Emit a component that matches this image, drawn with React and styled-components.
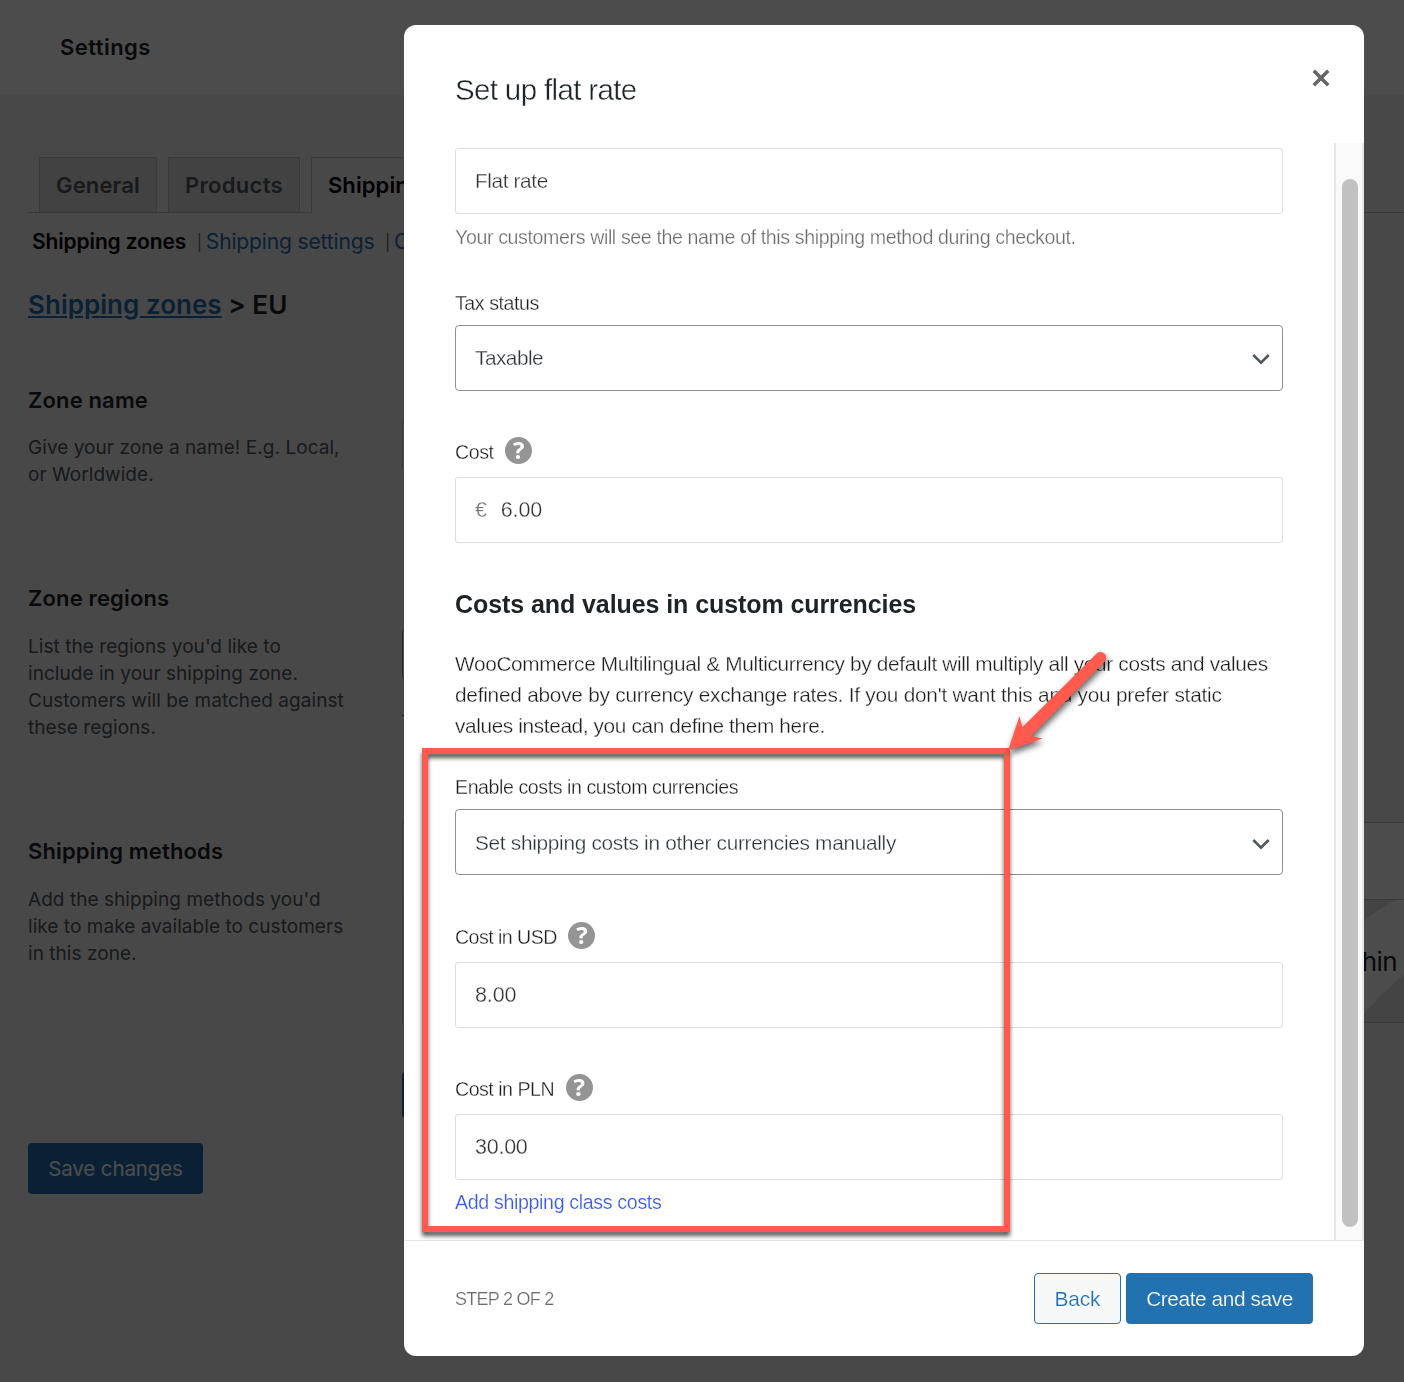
import React from 'react'
import styled, { createGlobalStyle } from 'styled-components'

const GlobalStyle = createGlobalStyle`
  * { box-sizing: border-box; }
  body {
    margin: 0;
    background: #f0f0f1;
    overflow: hidden;
  }
`

/* ---------- settings page ---------- */

const Page = styled.div`
  height: 1382px;
  background: #f0f0f1;
  color: #1d2327;
  font-family: Inter, sans-serif;
  font-size: 21px;
  overflow: hidden;
`

const TopBar = styled.header`
  display: flex;
  align-items: center;
  height: 95px;
  padding: 0 0 2px 60px;
  background: #fff;
  font-size: 22px;
  font-weight: 600;
  letter-spacing: 0.45px;
`

const Main = styled.main`
  padding: 62px 0 0 28px;
`

const Tabs = styled.nav`
  display: flex;
  gap: 11px;
  height: 56px;
  padding-left: 11px;
  border-bottom: 1px solid #c3c4c7;
`

const Tab = styled.a`
  height: ${p => (p.$active ? '56px' : '55px')};
  padding: 0 16px;
  border: 1px solid #c3c4c7;
  border-bottom: ${p => (p.$active ? '1px solid #f0f0f1' : 'none')};
  background: ${p => (p.$active ? '#f0f0f1' : '#dcdcde')};
  color: ${p => (p.$active ? '#000' : '#50575e')};
  font-size: 22px;
  font-weight: 600;
  line-height: 55px;
  letter-spacing: ${p => p.$spacing || 0}px;
`

const SubNav = styled.div`
  display: flex;
  height: 58px;
  padding-left: 4px;
  line-height: 58px;
  letter-spacing: -0.14px;
  color: #646970;
  white-space: pre;
`

const SubLink = styled.a`
  color: ${p => (p.$current ? '#000' : '#2271b1')};
  font-weight: ${p => (p.$current ? 600 : 400)};
`

const Divider = styled.span`
  padding: 0 4px 0 10.5px;
  font-size: 16px;
`

const Crumbs = styled.h2`
  height: 100px;
  margin: 0;
  padding-top: 14px;
  font-size: 26px;
  font-weight: 600;
  line-height: 40px;
  letter-spacing: 0.03px;
`

const CrumbLink = styled.a`
  color: #2271b1;
  text-decoration: underline;
`

const FormRow = styled.section`
  display: grid;
  grid-template-columns: 374px 1fr;
  height: ${p => p.$height}px;
`

const RowTitle = styled.h3`
  margin: 0 0 ${p => p.$gap}px;
  padding-top: 15px;
  font-size: 22px;
  font-weight: 600;
  line-height: 28px;
  letter-spacing: 0.15px;
`

const RowText = styled.p`
  width: 322px;
  margin: 0;
  color: #50575e;
  font-size: 19px;
  line-height: 27px;
  letter-spacing: 0.05px;
`

const FieldCell = styled.div`
  padding-top: ${p => p.$top || 0}px;
`

const ZoneField = styled.div`
  width: 600px;
  height: 54px;
  border: 1px solid ${p => p.$border};
  border-radius: 6px;
  background: #fff;
`

const ZoneLink = styled.div`
  width: 300px;
  margin-top: 34px;
  border-top: 1px solid #2271b1;
`

const MethodTable = styled.div`
  height: 201px;
  border: 1px solid #c3c4c7;
  border-right: none;
`

const MethodHead = styled.div`
  height: 77px;
  border-bottom: 1px solid #c3c4c7;
  background: #fff;
`

const MethodBody = styled.div`
  position: relative;
  display: flex;
  align-items: center;
  justify-content: flex-end;
  height: 122px;
  padding-right: 7px;
  font-size: 26px;
  letter-spacing: -0.6px;
`

const Backdrop = styled.svg`
  position: absolute;
  top: 0;
  right: 0;
`

const MethodText = styled.span`
  position: relative;
`

const AddButton = styled.div`
  width: 240px;
  height: 46px;
  margin-top: 49px;
  border-radius: 4px;
  background: #2271b1;
`

const SaveButton = styled.button`
  width: 175px;
  height: 51px;
  padding: 0;
  border: none;
  border-radius: 4px;
  background: #2271b1;
  color: #fff;
  font: 400 20.5px Inter, sans-serif;
  letter-spacing: -0.12px;
`

/* ---------- modal ---------- */

const Overlay = styled.div`
  position: fixed;
  inset: 0;
  display: flex;
  padding: 24.5px 40px 26px 404px;
  background: rgba(0, 0, 0, 0.7);
`

const Modal = styled.div`
  display: flex;
  flex: 1;
  flex-direction: column;
  border-radius: 12px;
  background: #fff;
  color: #1e1e1e;
  font-family: 'Liberation Sans', Arial, sans-serif;
  overflow: hidden;
`

const ModalHeader = styled.div`
  display: flex;
  justify-content: space-between;
  height: 118.5px;
  padding: 44.5px 34px 0 51px;
`

const Title = styled.h1`
  margin: 0;
  color: #1d2327;
  font-size: 29.5px;
  font-weight: 400;
  line-height: 41px;
  letter-spacing: -0.65px;
  -webkit-text-stroke: 0.4px #fff;
`

const CloseIcon = styled.svg`
  width: 18px;
  height: 18px;
`

const ModalBody = styled.div`
  display: flex;
  justify-content: space-between;
  height: 1097px;
`

const Content = styled.div`
  width: 879px;
  padding: 5px 0 0 51px;
`

const Control = styled.div`
  display: flex;
  align-items: center;
  justify-content: space-between;
  height: 66px;
  padding: ${p => p.$drop || 0}px 12px 0 19px;
  border: 1px solid ${p => (p.$select ? '#8c8f94' : '#dcdcde')};
  border-radius: ${p => (p.$select ? 4 : 3)}px;
  color: ${p => (p.$select ? '#2c3338' : '#333')};
  font-size: ${p => (p.$numeric ? 21.5 : 20.8)}px;
  letter-spacing: ${p => p.$spacing || 0}px;
  -webkit-text-stroke: 0.3px #fff;
`

const Currency = styled.span`
  margin-right: 14px;
  color: #757575;
`

const Hint = styled.p`
  margin: 10.5px 0 0;
  color: #6c6c6c;
  font-size: 19.6px;
  line-height: 24px;
  letter-spacing: -0.38px;
  -webkit-text-stroke: 0.25px #fff;
`

const Label = styled.div`
  display: flex;
  align-items: center;
  height: 28px;
  margin: ${p => p.$top}px 0 ${p => p.$bottom}px;
  padding-top: 1px;
  font-size: 19.6px;
  letter-spacing: ${p => p.$spacing || -0.43}px;
  -webkit-text-stroke: 0.3px #fff;
`

const HelpTip = styled.span`
  width: 27px;
  height: 27px;
  margin: -4px 0 0 11.7px;
  border-radius: 50%;
  background: #949494;
  color: #fff;
  font: 700 24px/26px 'Open Sans', sans-serif;
  letter-spacing: 0;
  text-align: center;
  -webkit-text-stroke: 0;
`

const SectionTitle = styled.h2`
  margin: 46px 0 28.5px;
  color: #1d2327;
  font-size: 25px;
  font-weight: 700;
  line-height: 30px;
  letter-spacing: -0.08px;
`

const Intro = styled.p`
  margin: 0;
  font-size: 20.8px;
  line-height: 31px;
  white-space: nowrap;
  -webkit-text-stroke: 0.3px #fff;
`

const IntroLine = styled.span`
  display: block;
  letter-spacing: ${p => p.$spacing}px;
`

const ClassLink = styled.a`
  display: block;
  margin-top: 9.5px;
  color: #3858e9;
  font-size: 19.6px;
  line-height: 24px;
  letter-spacing: -0.34px;
  -webkit-text-stroke: 0.2px #fff;
`

const Track = styled.div`
  width: 30px;
  padding: 36px 0 13px 6px;
  border: solid #e8e8e8;
  border-width: 0 2px;
  background: #fafafa;
`

const Thumb = styled.div`
  width: 16px;
  height: 100%;
  border-radius: 8px;
  background: #c1c1c1;
`

const Footer = styled.div`
  display: flex;
  flex: 1;
  align-items: center;
  gap: 5px;
  padding: 0 51px;
  border-top: 1px solid #e4e4e4;
`

const Step = styled.span`
  margin-right: auto;
  padding-top: 2px;
  color: #6c6c6c;
  font-size: 18px;
  letter-spacing: -0.75px;
  -webkit-text-stroke: 0.2px #fff;
`

const Button = styled.button`
  width: ${p => (p.$primary ? 187 : 87)}px;
  height: 51px;
  padding: 0;
  border: 1px solid #2271b1;
  border-radius: 4px;
  background: ${p => (p.$primary ? '#2271b1' : '#f6f7f7')};
  color: ${p => (p.$primary ? '#fff' : '#2271b1')};
  font: 400 20.8px 'Liberation Sans', Arial, sans-serif;
  letter-spacing: ${p => (p.$primary ? -0.4 : -0.1)}px;
  -webkit-text-stroke: 0.2px ${p => (p.$primary ? '#2271b1' : '#f6f7f7')};
`

/* ---------- annotation ---------- */

const Highlight = styled.div`
  position: fixed;
  top: 748px;
  left: 422px;
  width: 588px;
  height: 484px;
  border: solid #ff5a4d;
  border-width: 6.5px 6px 6px;
  filter: drop-shadow(0 4px 2px rgba(0, 0, 0, 0.65));
`

const Arrow = styled.svg`
  position: fixed;
  top: 640px;
  left: 1000px;
  filter: drop-shadow(1px 4px 3px rgba(0, 0, 0, 0.6));
`

const ChevronIcon = styled.svg`
  margin-top: 2px;
`

function Chevron() {
  return (
    <ChevronIcon width="18" height="12" viewBox="0 0 18 12">
      <path d="M1.3 2 L9 9.6 L16.7 2" fill="none" stroke="#50575e" strokeWidth="2.6" />
    </ChevronIcon>
  )
}

function Help() {
  return <HelpTip>?</HelpTip>
}

function ZoneRow({ title, text, height, top, gap = 21, children }) {
  return (
    <FormRow $height={height}>
      <div>
        <RowTitle $gap={gap}>{title}</RowTitle>
        <RowText>{text}</RowText>
      </div>
      <FieldCell $top={top}>{children}</FieldCell>
    </FormRow>
  )
}

function SettingsPage() {
  return (
    <Page>
      <TopBar>Settings</TopBar>
      <Main>
        <Tabs>
          <Tab $spacing={0.16}>General</Tab>
          <Tab $spacing={0.3}>Products</Tab>
          <Tab $active $spacing={0.1}>Shipping</Tab>
        </Tabs>
        <SubNav>
          <SubLink $current>Shipping zones</SubLink>
          <Divider>|</Divider>
          <SubLink>Shipping settings</SubLink>
          <Divider>|</Divider>
          <SubLink>C</SubLink>
        </SubNav>
        <Crumbs><CrumbLink>Shipping zones</CrumbLink> &gt; EU</Crumbs>
        <ZoneRow title="Zone name" text="Give your zone a name! E.g. Local, or Worldwide." height={198} top={47} gap={20}>
          <ZoneField $border="#c3c4c7" />
        </ZoneRow>
        <ZoneRow
          title="Zone regions"
          text="List the regions you'd like to include in your shipping zone. Customers will be matched against these regions."
          height={253}
          top={58}
        >
          <ZoneField $border="#8c8f94" />
          <ZoneLink />
        </ZoneRow>
        <ZoneRow
          title="Shipping methods"
          text="Add the shipping methods you'd like to make available to customers in this zone."
          height={321}
        >
          <MethodTable>
            <MethodHead />
            <MethodBody>
              <Backdrop width="60" height="122">
                <rect width="60" height="122" fill="#fff" />
                <path d="M0 0 H52 Q34 9 20 21 L0 36 Z" fill="#e3e3e3" />
                <path d="M60 75 Q38 92 20 114 L12 122 H60 Z" fill="#e3e3e3" />
              </Backdrop>
              <MethodText>hin</MethodText>
            </MethodBody>
          </MethodTable>
          <AddButton />
        </ZoneRow>
        <SaveButton>Save changes</SaveButton>
      </Main>
    </Page>
  )
}

function FlatRateModal() {
  return (
    <Modal>
      <ModalHeader>
        <Title>Set up flat rate</Title>
        <CloseIcon viewBox="0 0 18 18">
          <path d="M1.8 1.8 L16.2 16.2 M16.2 1.8 L1.8 16.2" stroke="#666" strokeWidth="3.6" />
        </CloseIcon>
      </ModalHeader>
      <ModalBody>
        <Content>
          <Control $spacing={-0.38}>Flat rate</Control>
          <Hint>Your customers will see the name of this shipping method during checkout.</Hint>
          <Label $top={40.5} $bottom={8}>Tax status</Label>
          <Control $select $spacing={-0.5}>Taxable<Chevron /></Control>
          <Label $top={47} $bottom={11}>Cost<Help /></Label>
          <Control $numeric $spacing={-0.15}><span><Currency>€</Currency>6.00</span></Control>
          <SectionTitle>Costs and values in custom currencies</SectionTitle>
          <Intro>
            <IntroLine $spacing={-0.335}>WooCommerce Multilingual &amp; Multicurrency by default will multiply all your costs and values</IntroLine>
            <IntroLine $spacing={-0.233}>defined above by currency exchange rates. If you don't want this and you prefer static</IntroLine>
            <IntroLine $spacing={-0.37}>values instead, you can define them here.</IntroLine>
          </Intro>
          <Label $top={32.5} $bottom={8}>Enable costs in custom currencies</Label>
          <Control $select $spacing={-0.29} $drop={2}>Set shipping costs in other currencies manually<Chevron /></Control>
          <Label $top={48} $bottom={11} $spacing={-0.55}>Cost in USD<Help /></Label>
          <Control $numeric $spacing={-0.15}>8.00</Control>
          <Label $top={47} $bottom={11} $spacing={-0.5}>Cost in PLN<Help /></Label>
          <Control $numeric $spacing={-0.25}>30.00</Control>
          <ClassLink>Add shipping class costs</ClassLink>
        </Content>
        <Track><Thumb /></Track>
      </ModalBody>
      <Footer>
        <Step>STEP 2 OF 2</Step>
        <Button>Back</Button>
        <Button $primary>Create and save</Button>
      </Footer>
    </Modal>
  )
}

export default function App() {
  return (
    <>
      <GlobalStyle />
      <SettingsPage />
      <Overlay>
        <FlatRateModal />
      </Overlay>
      <Highlight />
      <Arrow width="120" height="120" viewBox="1000 640 120 120">
        <path
          d="M1008 750.5 L1019.5 716 L1022.3 727.3 L1096.7 653.4 A5.7 5.7 0 0 1 1104.8 661.4 L1031 736 L1042.5 738.5 Z"
          fill="#ff5a4d"
        />
      </Arrow>
    </>
  )
}
